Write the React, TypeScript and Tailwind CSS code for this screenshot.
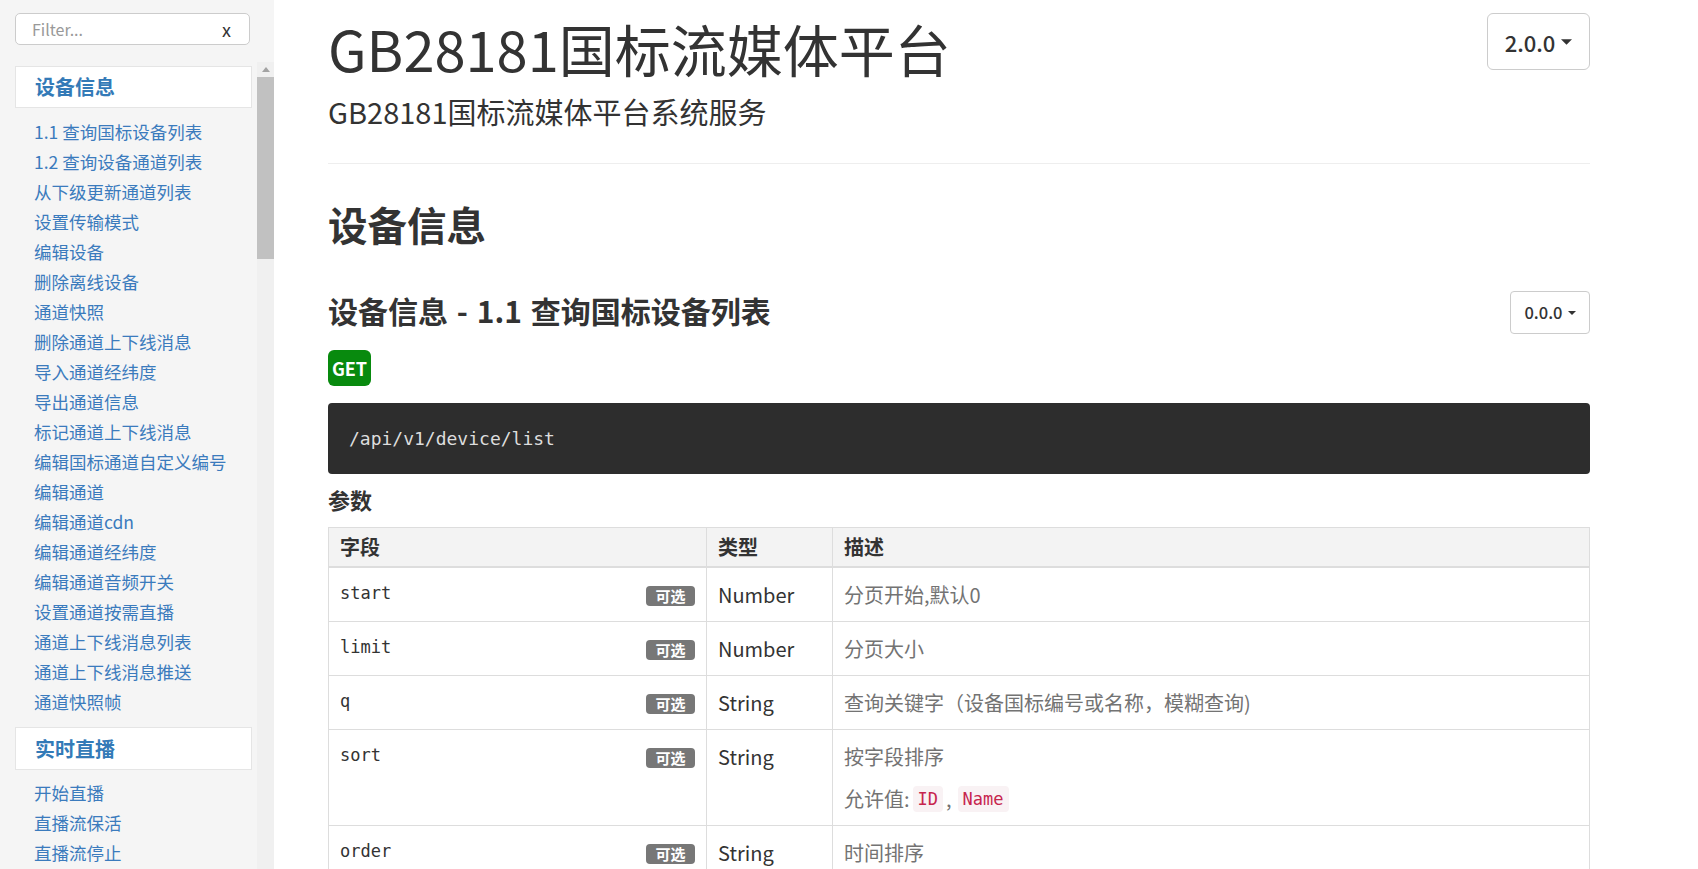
const deviceLinks = [
  '1.1 查询国标设备列表',
  '1.2 查询设备通道列表',
  '从下级更新通道列表',
  '设置传输模式',
  '编辑设备',
  '删除离线设备',
  '通道快照',
  '删除通道上下线消息',
  '导入通道经纬度',
  '导出通道信息',
  '标记通道上下线消息',
  '编辑国标通道自定义编号',
  '编辑通道',
  '编辑通道cdn',
  '编辑通道经纬度',
  '编辑通道音频开关',
  '设置通道按需直播',
  '通道上下线消息列表',
  '通道上下线消息推送',
  '通道快照帧',
];

const liveLinks = ['开始直播', '直播流保活', '直播流停止'];

interface Param {
  field: string;
  type: string;
  desc: string;
  allowed?: string[];
}

const params: Param[] = [
  { field: 'start', type: 'Number', desc: '分页开始,默认0' },
  { field: 'limit', type: 'Number', desc: '分页大小' },
  { field: 'q', type: 'String', desc: '查询关键字（设备国标编号或名称，模糊查询)' },
  { field: 'sort', type: 'String', desc: '按字段排序', allowed: ['ID', 'Name'] },
  { field: 'order', type: 'String', desc: '时间排序' },
];

function Caret({ className }: { className?: string }) {
  return (
    <svg viewBox="0 0 10 5" className={className} fill="currentColor">
      <path d="M0 0h10L5 5z" />
    </svg>
  );
}

function Sidebar() {
  return (
    <aside className="w-[274px] shrink-0 h-full bg-[#f5f5f5] flex flex-col">
      {/* filter box */}
      <div className="pl-[15px] pt-[13px] pb-[17px]">
        <div className="w-[235px] h-[32px] bg-white border border-[#ccc] rounded-[5px] flex items-center justify-between pl-[16px] pr-[18px]">
          <span className="text-[16px] text-[#999] leading-none">Filter...</span>
          <span className="text-[18px] text-[#333] leading-none">x</span>
        </div>
      </div>

      <div className="flex-1 flex min-h-0">
        <nav className="w-[257px] pl-[15px] pr-[5px] pt-[4px] overflow-hidden">
          <div className="h-[42px] bg-white border border-[#e5e5e5] flex items-center pl-[19px]">
            <span className="text-[20px] font-bold text-[#337ab7] leading-none">设备信息</span>
          </div>
          <ul className="mt-[9px] mb-[10px]">
            {deviceLinks.map((l) => (
              <li key={l} className="pl-[19px] text-[17.5px] leading-[30px] text-[#3b7bbd] whitespace-nowrap">
                {l}
              </li>
            ))}
          </ul>
          <div className="h-[43px] bg-white border border-[#e5e5e5] flex items-center pl-[19px]">
            <span className="text-[20px] font-bold text-[#337ab7] leading-none">实时直播</span>
          </div>
          <ul className="mt-[8px]">
            {liveLinks.map((l) => (
              <li key={l} className="pl-[19px] text-[17.5px] leading-[30px] text-[#3b7bbd] whitespace-nowrap">
                {l}
              </li>
            ))}
          </ul>
        </nav>

        {/* scrollbar */}
        <div className="w-[17px] bg-[#f0f0f0] flex flex-col">
          <div className="h-[15px] flex items-center justify-center text-[#a3a3a3]">
            <svg viewBox="0 0 8 5" className="w-[8px] h-[5px]" fill="currentColor">
              <path d="M0 5L4 0l4 5z" />
            </svg>
          </div>
          <div className="h-[182px] bg-[#c1c1c1]" />
        </div>
      </div>
    </aside>
  );
}

function ParamsTable() {
  return (
    <table className="w-full table-fixed border-collapse">
      <colgroup>
        <col className="w-[378px]" />
        <col className="w-[126px]" />
        <col />
      </colgroup>
      <thead>
        <tr className="bg-[#f3f3f3]">
          {['字段', '类型', '描述'].map((h) => (
            <th
              key={h}
              className="border border-[#ddd] border-b-2 px-[11px] py-[5px] text-left text-[20px] font-bold leading-[28px] text-[#333]"
            >
              {h}
            </th>
          ))}
        </tr>
      </thead>
      <tbody>
        {params.map((p) => (
          <tr key={p.field}>
            <td className="border border-[#ddd] pl-[11px] pr-[11px] pt-[13px] pb-[12px] align-top">
              <div className="flex items-start justify-between">
                <span className="font-['DejaVu_Sans_Mono',monospace] text-[17px] leading-[24px] text-[#333]">
                  {p.field}
                </span>
                <span className="mt-[5px] h-[20px] w-[49px] rounded-[4px] bg-[#777] text-white text-[15px] font-bold leading-[20px] text-center">
                  可选
                </span>
              </div>
            </td>
            <td className="border border-[#ddd] px-[11px] pt-[13px] pb-[12px] align-top text-[20px] leading-[28px] text-[#333]">
              {p.type}
            </td>
            <td className="border border-[#ddd] px-[11px] pt-[13px] pb-[12px] align-top text-[20px] leading-[28px] text-[#737373]">
              <p>{p.desc}</p>
              {p.allowed && (
                <p className="mt-[14px] flex items-center">
                  允许值:
                  {p.allowed.map((a, i) => (
                    <span key={a} className="flex items-center">
                      {i > 0 && <span className="mx-[3px]">,</span>}
                      <code className="ml-[3px] px-[5px] rounded-[4px] bg-[#f9f2f4] text-[#c7254e] font-['DejaVu_Sans_Mono',monospace] text-[17px] leading-[26px]">
                        {a}
                      </code>
                    </span>
                  ))}
                </p>
              )}
            </td>
          </tr>
        ))}
      </tbody>
    </table>
  );
}

export default function App() {
  return (
    <div className="flex h-screen overflow-hidden bg-white font-['Noto_Sans_CJK_SC',sans-serif] text-[#333]">
      <Sidebar />

      <main className="flex-1 min-w-0 overflow-hidden pl-[54px] pt-[13px]">
        <div className="w-[1262px]">
          {/* page header */}
          <div className="flex items-start justify-between">
            <h1 className="mt-[3px] text-[56px] leading-[64px] font-normal text-[#333]">GB28181国标流媒体平台</h1>
            <button className="h-[57px] w-[103px] border border-[#ccc] rounded-[6px] bg-white flex items-center justify-center gap-[6px] text-[#333]">
              <span className="text-[22px] font-medium leading-none">2.0.0</span>
              <Caret className="w-[11px] h-[6px]" />
            </button>
          </div>
          <div className="mt-[11px] text-[29px] leading-[40px] text-[#333]">GB28181国标流媒体平台系统服务</div>
          <div className="mt-[32px] border-t border-[#eee]" />

          {/* section */}
          <h2 className="mt-[35px] text-[39.5px] leading-[50px] font-bold text-[#333]">设备信息</h2>

          <div className="mt-[42px] flex items-start justify-between">
            <h3 className="text-[30px] leading-[38px] font-bold text-[#333] whitespace-pre [word-spacing:2px]">设备信息 - 1.1 查询国标设备列表</h3>
            <button className="h-[43px] w-[80px] border border-[#ccc] rounded-[4px] bg-white flex items-center justify-center gap-[5px] text-[#333]">
              <span className="text-[16.5px] font-medium leading-none">0.0.0</span>
              <Caret className="w-[8px] h-[4px]" />
            </button>
          </div>

          <div className="mt-[16px] flex">
            <span className="h-[36px] w-[43px] rounded-[6px] bg-[#088a0e] text-white text-[18px] font-bold flex items-center justify-center">
              GET
            </span>
          </div>

          <pre className="mt-[17px] h-[71px] rounded-[4px] bg-[#2d2d2d] px-[21px] flex items-center font-['DejaVu_Sans_Mono',monospace] text-[18px] text-[#ddd]">
            /api/v1/device/list
          </pre>

          <h4 className="mt-[10px] text-[22px] leading-[30px] font-bold text-[#333]">参数</h4>

          <div className="mt-[13px]">
            <ParamsTable />
          </div>
        </div>
      </main>
    </div>
  );
}
